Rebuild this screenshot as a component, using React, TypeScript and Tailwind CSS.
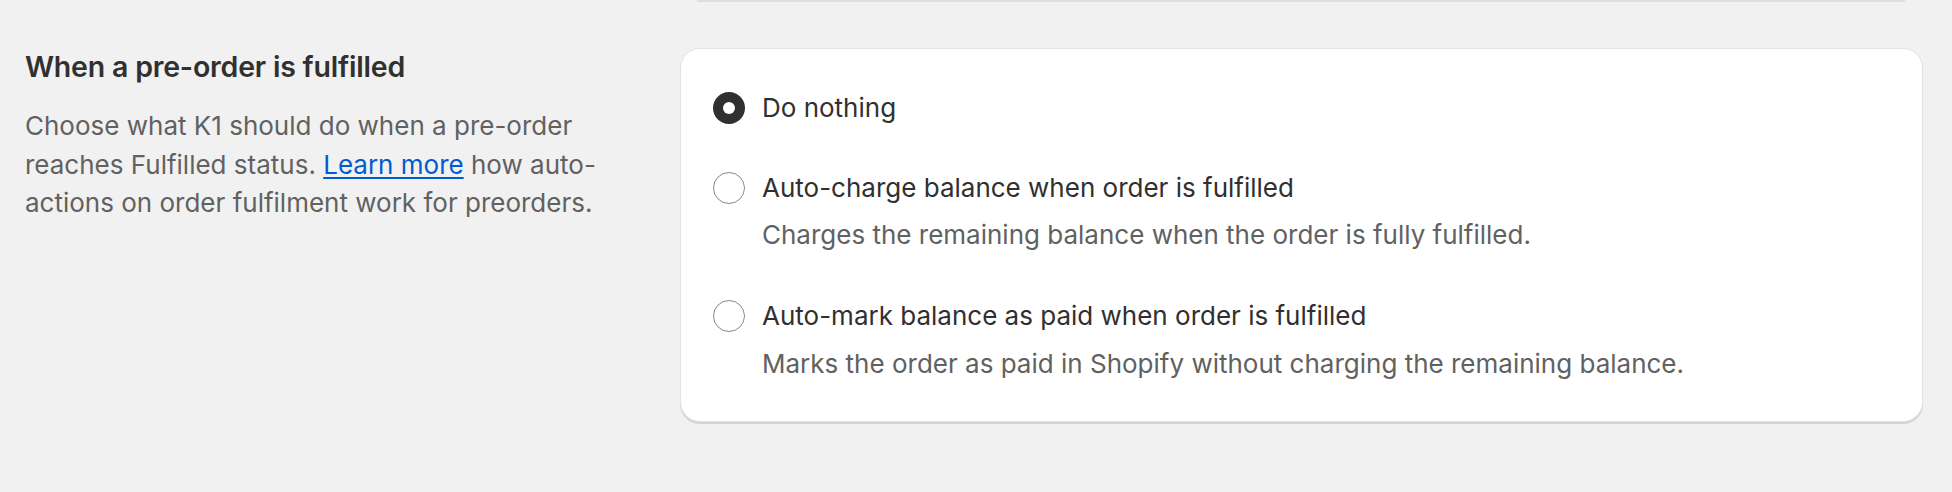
import React from "react";

function Radio({ checked }: { checked?: boolean }) {
  return checked ? (
    <span className="flex h-[32px] w-[32px] shrink-0 items-center justify-center rounded-full bg-[#303030]">
      <span className="h-[12px] w-[12px] rounded-full bg-white" />
    </span>
  ) : (
    <span className="h-[32px] w-[32px] shrink-0 rounded-full border border-[#8a8a8a] bg-white" />
  );
}

export default function App() {
  return (
    <div
      className="h-[492px] w-[1952px] bg-[#f1f1f1] text-[#303030]"
      style={{ fontFamily: "Inter, 'Noto Sans', sans-serif" }}
    >
      <div className="flex pl-[697px] pr-[47px]">
        <div className="h-[2px] flex-1 bg-[#dedede]" />
      </div>
      <div className="flex pl-[25px] pt-[46px]">
        <div className="w-[600px] shrink-0">
          <h2 className="text-[28.5px] font-semibold leading-[38px] tracking-[-0.2px] text-[#303030]">
            When a pre-order is fulfilled
          </h2>
          <p className="mt-[21px] w-[590px] text-[26px] leading-[38.5px] text-[#616161]">
            Choose what K1 should do when a pre-order reaches Fulfilled status.{" "}
            <a className="text-[#005bd3] underline underline-offset-[3px]">Learn more</a> how auto-actions on
            order fulfilment work for preorders.
          </p>
        </div>
        <div className="ml-[55px] w-[1243px] shrink-0 rounded-[20px] border border-[#e3e3e3] bg-white pb-[38px] pl-[32px] pr-[32px] pt-[40px] shadow-[0_2px_0_0_#d4d4d4]">
          <div className="flex items-center gap-[17px]">
            <Radio checked />
            <span className="text-[26px] leading-[38px]">Do nothing</span>
          </div>
          <div className="mt-[42px] flex items-center gap-[17px]">
            <Radio />
            <span className="text-[26px] leading-[38px]">Auto-charge balance when order is fulfilled</span>
          </div>
          <div className="mt-[9px] pl-[49px] text-[26px] leading-[38px] text-[#616161]">
            Charges the remaining balance when the order is fully fulfilled.
          </div>
          <div className="mt-[43px] flex items-center gap-[17px]">
            <Radio />
            <span className="text-[26px] leading-[38px]">Auto-mark balance as paid when order is fulfilled</span>
          </div>
          <div className="mt-[10px] pl-[49px] text-[26px] leading-[38px] text-[#616161]">
            Marks the order as paid in Shopify without charging the remaining balance.
          </div>
        </div>
      </div>
    </div>
  );
}
